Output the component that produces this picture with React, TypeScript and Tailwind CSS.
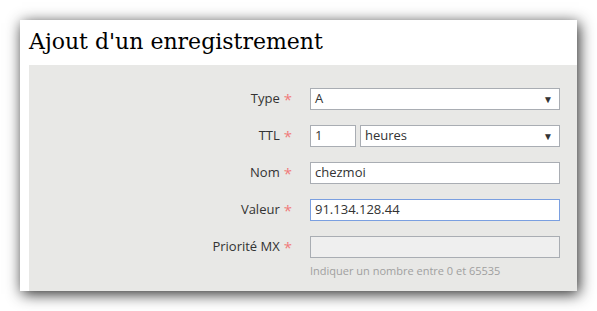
import { ReactNode } from "react";

function Row({ label, children, help }: { label: string; children: ReactNode; help?: string }) {
  return (
    <div className="flex items-start gap-[18px]">
      <div className="flex h-[22px] w-[263px] items-center justify-end gap-[4px] text-[13px] text-[#333]">
        <span>{label}</span>
        <span className="text-[15px] text-[#f07b7b]">*</span>
      </div>
      <div className="w-[250px]">
        {children}
        {help && <div className="mt-[5px] text-[11px] text-[#a0a0a0]">{help}</div>}
      </div>
    </div>
  );
}

function Select({ value, className }: { value: string; className?: string }) {
  return (
    <div
      className={`flex h-[22px] items-center justify-between border border-[#a9adb3] bg-white pl-[4px] pr-[6px] text-[13px] text-[#333] ${className ?? ""}`}
    >
      <span>{value}</span>
      <span className="text-[10px] text-[#333]">▼</span>
    </div>
  );
}

function Input({ value, focus, disabled }: { value?: string; focus?: boolean; disabled?: boolean }) {
  const border = focus ? "border-[#7a9fe0]" : "border-[#a9adb3]";
  const bg = disabled ? "bg-[#efefef]" : "bg-white";
  return (
    <div className={`flex h-[22px] items-center border ${border} ${bg} pl-[4px] text-[13px] text-[#333]`}>
      {value}
    </div>
  );
}

export default function App() {
  return (
    <div className="h-[311px] w-[597px] bg-white p-5" style={{ fontFamily: '"Open Sans", sans-serif' }}>
      <div className="flex h-[271px] w-[557px] flex-col bg-white pl-[9px] shadow-[2px_3px_14px_rgba(0,0,0,0.85)]">
        <h1
          className="flex h-[45px] items-center pb-[2px] text-[22px] text-black"
          style={{ fontFamily: '"DejaVu Serif", serif' }}
        >
          Ajout d'un enregistrement
        </h1>
        <div className="flex flex-1 flex-col gap-[15px] bg-[#e8e8e6] pt-[23px]">
          <Row label="Type">
            <Select value="A" />
          </Row>
          <Row label="TTL">
            <div className="flex gap-[4px]">
              <div className="w-[46px]">
                <Input value="1" />
              </div>
              <Select value="heures" className="flex-1" />
            </div>
          </Row>
          <Row label="Nom">
            <Input value="chezmoi" />
          </Row>
          <Row label="Valeur">
            <Input value="91.134.128.44" focus />
          </Row>
          <Row label="Priorité MX" help="Indiquer un nombre entre 0 et 65535">
            <Input disabled />
          </Row>
        </div>
      </div>
    </div>
  );
}
